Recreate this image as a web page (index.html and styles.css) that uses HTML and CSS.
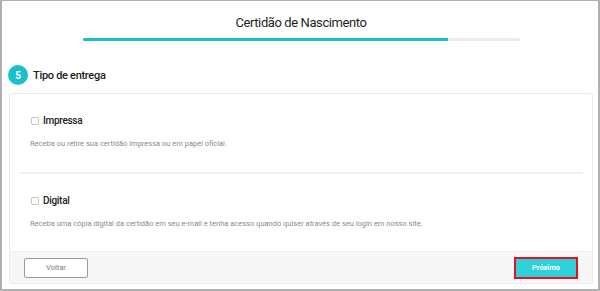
FILE: index.html
```html
<!DOCTYPE html>
<html lang="pt-BR">
<head>
    <meta charset="UTF-8">
    <meta name="viewport" content="width=device-width, initial-scale=1.0">
    <title>Certidão de Nascimento</title>
    <link rel="stylesheet" href="styles.css">
</head>
<body>
    <div class="frame">
        <h1 class="title">Certidão de Nascimento</h1>
        <div class="progress"><div class="progress-fill"></div></div>

        <div class="step">
            <span class="step-badge">5</span>
            <span class="step-name">Tipo de entrega</span>
        </div>

        <div class="card">
            <div class="option">
                <label class="option-label"><input type="checkbox"> Impressa</label>
                <p class="option-desc">Receba ou retire sua certidão impressa ou em papel oficial.</p>
            </div>
            <div class="separator"></div>
            <div class="option option-last">
                <label class="option-label"><input type="checkbox"> Digital</label>
                <p class="option-desc">Receba uma cópia digital da certidão em seu e-mail e tenha acesso quando quiser através de seu login em nosso site.</p>
            </div>
            <div class="card-footer">
                <button class="btn-back">Voltar</button>
                <div class="highlight">
                    <button class="btn-next">Próximo</button>
                </div>
            </div>
        </div>
    </div>
</body>
</html>
```

FILE: styles.css
```css
:root {
    --font: Roboto, "Liberation Sans", Arial, sans-serif;
    --teal: #17c0cb;
    --text-main: #222226;
    --text-muted: #8a8a8a;
    --line: #ececec;
}
* {
    box-sizing: border-box;
}
body {
    margin: 0;
    font-family: var(--font);
    color: var(--text-main);
    background: #fff;
}
.frame {
    width: 600px;
    height: 291px;
    border: 1px solid #b0b0b0;
    border-left-width: 2px;
    border-bottom-width: 2px;
    border-right-width: 2px;
    padding: 12px 5px 0 7px;
}
.title {
    margin: 0;
    font-size: 13px;
    line-height: 20px;
    letter-spacing: -0.4px;
    font-weight: 400;
    text-align: center;
    color: #1f1f23;
}
.progress {
    width: 437px;
    height: 3px;
    margin: 5px auto 0;
    background: #e8ecef;
    border-radius: 2px;
}
.progress-fill {
    width: 365px;
    height: 100%;
    background: var(--teal);
    border-radius: 2px 0 0 2px;
}
.step {
    display: flex;
    align-items: center;
    gap: 5px;
    margin-top: 24px;
    height: 20px;
}
.step-badge {
    width: 20px;
    height: 20px;
    margin-left: -1px;
    border-radius: 50%;
    background: var(--teal);
    color: #fff;
    font-size: 10px;
    font-weight: 700;
    display: flex;
    align-items: center;
    justify-content: center;
}
.step-name {
    font-size: 11px;
    letter-spacing: -0.3px;
    font-weight: 500;
}
.card {
    margin-top: 8px;
    border: 1px solid var(--line);
    border-radius: 2px;
}
.option {
    padding: 20px 20px 22px;
}
.option-last {
    padding-top: 20px;
    padding-bottom: 21px;
}
.option-label {
    display: flex;
    align-items: center;
    gap: 4px;
    font-size: 10px;
    line-height: 14px;
    letter-spacing: -0.3px;
    font-weight: 500;
}
.option-label input {
    appearance: none;
    margin: 0 0 0 1px;
    width: 8px;
    height: 8px;
    border: 1px solid #c4c4c4;
    border-radius: 2px;
    background: #fff;
}
.option-desc {
    margin: 10px 0 0;
    font-size: 7.5px;
    line-height: 12px;
    color: var(--text-muted);
}
.separator {
    height: 2px;
    margin: 0 9px 0 10px;
    background: #efefef;
}
.card-footer {
    display: flex;
    justify-content: space-between;
    align-items: center;
    height: 32px;
    padding: 0 14px;
    background: #f7f7f7;
    border-top: 1px solid #efefef;
}
.btn-back {
    width: 64px;
    height: 20px;
    font-family: var(--font);
    font-size: 7.5px;
    color: #7a7a7a;
    background: #fff;
    border: 1px solid #9a9a9a;
    border-radius: 2px;
}
.highlight {
    border: 2px solid #e8101e;
}
.btn-next {
    display: block;
    width: 60px;
    height: 18px;
    font-family: var(--font);
    font-size: 7.5px;
    font-weight: 700;
    color: #fff;
    background: #2ed1d9;
    border: none;
}
```
